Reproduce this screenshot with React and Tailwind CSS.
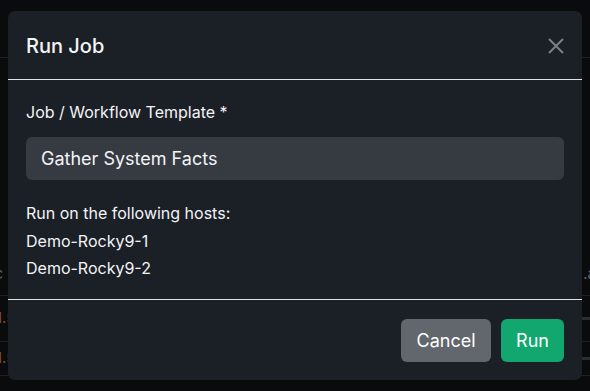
import React from 'react'

const hosts = ['Demo-Rocky9-1', 'Demo-Rocky9-2']

const BackgroundPage = () => (
  <div className="flex flex-col">
    <div className="h-[58px] border-b border-[#1c1f24]" />
    <div className="h-[196px]" />
    <div className="h-[42px] flex items-center justify-between border-b border-[#1c1f24] text-[15px] text-[#5f646b]">
      <span className="-ml-[14px]">ac</span>
      <span className="-mr-[6px]">.a</span>
    </div>
    <div className="h-[46px] flex items-center justify-between border-b border-[#1c1f24] text-[15px]">
      <span className="-ml-[4px] text-[#7a5220]">1.5</span>
      <span className="w-[8px] h-[3px] bg-[#2a2d31]" />
    </div>
    <div className="h-[34px] flex items-center justify-between border-b border-[#1c1f24] text-[15px]">
      <span className="-ml-[4px] text-[#7a5220]">1.5</span>
      <span className="w-[8px] h-[3px] bg-[#2a2d31]" />
    </div>
  </div>
)

const CloseIcon = () => (
  <svg width="16" height="16" viewBox="0 0 16 16" fill="none">
    <path d="M1 1L15 15M15 1L1 15" stroke="#7c7f85" strokeWidth="2" />
  </svg>
)

export default function App() {
  return (
    <div
      className="relative w-[590px] h-[391px] overflow-hidden bg-[#0a0b0d]"
      style={{ fontFamily: 'Inter, "Noto Sans", sans-serif' }}
    >
      <BackgroundPage />

      {/* modal */}
      <div className="absolute left-[8px] top-[11px] w-[574px] rounded-[7px] bg-[#1b1f26] text-[#f3f4f6]">
        <div className="flex items-center justify-between h-[69px] px-[18px] pt-[2px] border-b border-[#dfe2e6]">
          <h5 className="text-[20px] font-medium leading-[30px]">Run Job</h5>
          <button className="p-0">
            <CloseIcon />
          </button>
        </div>

        <div className="px-[18px] pt-[20px] pb-[16px] text-[16px]">
          <label className="block leading-6 mb-[13px]">Job / Workflow Template *</label>
          <div className="h-[43px] flex items-center rounded-[6px] bg-[#363a41] px-[15px] text-[18px]">
            Gather System Facts
          </div>
          <div className="mt-[20px] leading-[27.5px]">
            <div>Run on the following hosts:</div>
            {hosts.map(h => (
              <div key={h}>{h}</div>
            ))}
          </div>
        </div>

        <div className="flex justify-end gap-[10px] px-[18px] pt-[19px] pb-[18px] border-t border-[#dfe2e6] text-[18px]">
          <button className="h-[43px] w-[90px] rounded-[6px] bg-[#62666d] text-white">Cancel</button>
          <button className="h-[43px] w-[63px] rounded-[6px] bg-[#12a76e] text-white">Run</button>
        </div>
      </div>
    </div>
  )
}
